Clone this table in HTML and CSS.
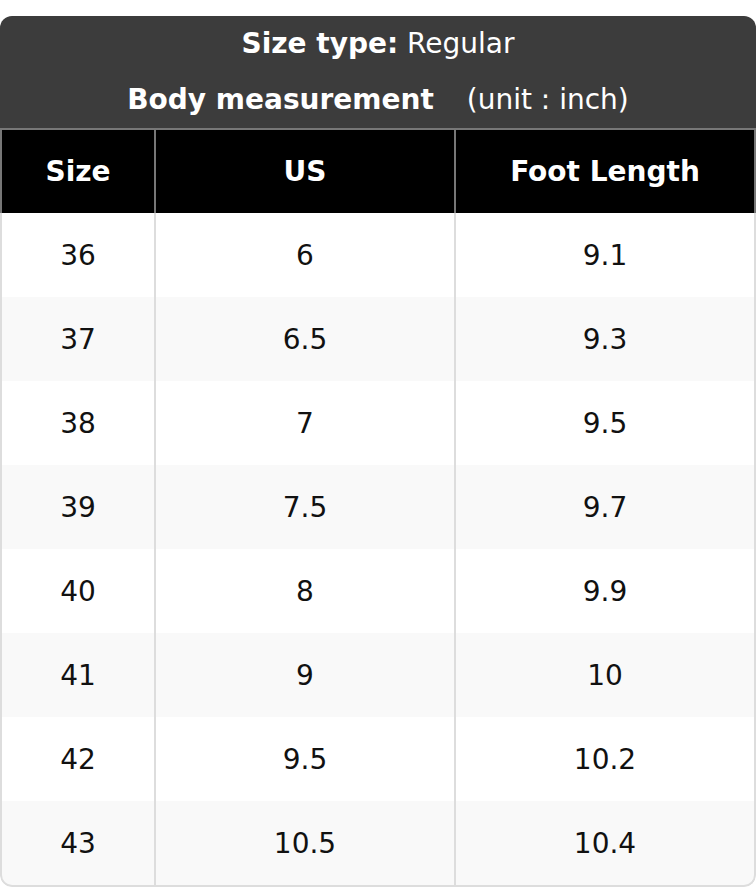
FILE: index.html
```html
<!DOCTYPE html>
<html lang="en">
<head>
<meta charset="utf-8">
<title>Size chart</title>
<link rel="stylesheet" href="styles.css">
</head>
<body>
<div class="card">
  <div class="head">
    <div class="head-line"><b>Size type:</b> Regular</div>
    <div class="head-line"><b class="gap">Body measurement</b> (unit : inch)</div>
  </div>
  <table class="chart">
    <colgroup>
      <col class="c1"><col class="c2"><col class="c3">
    </colgroup>
    <thead>
      <tr><th>Size</th><th>US</th><th>Foot Length</th></tr>
    </thead>
    <tbody>
      <tr><td>36</td><td>6</td><td>9.1</td></tr>
      <tr><td>37</td><td>6.5</td><td>9.3</td></tr>
      <tr><td>38</td><td>7</td><td>9.5</td></tr>
      <tr><td>39</td><td>7.5</td><td>9.7</td></tr>
      <tr><td>40</td><td>8</td><td>9.9</td></tr>
      <tr><td>41</td><td>9</td><td>10</td></tr>
      <tr><td>42</td><td>9.5</td><td>10.2</td></tr>
      <tr><td>43</td><td>10.5</td><td>10.4</td></tr>
    </tbody>
  </table>
</div>
</body>
</html>
```

FILE: styles.css
```css
html, body {
  margin: 0;
  padding: 0;
  background: #ffffff;
}
body {
  font-family: "DejaVu Sans", "Liberation Sans", sans-serif;
  font-size: 28px;
  color: #111111;
}
.card {
  margin-top: 16px;
  width: 756px;
  border-radius: 12px;
  overflow: hidden;
}
.head {
  background: #3c3c3c;
  color: #ffffff;
  text-align: center;
}
.head-line {
  height: 56px;
  line-height: 56px;
  white-space: nowrap;
}
.head-line b {
  font-weight: bold;
}
.gap {
  margin-right: 24px;
}
.chart {
  width: 756px;
  table-layout: fixed;
  border-collapse: separate;
  border-spacing: 0;
}
.c1 { width: 156px; }
.c2 { width: 300px; }
.c3 { width: 300px; }
.chart th {
  background: #000000;
  color: #ffffff;
  font-weight: bold;
  height: 83px;
  padding: 0;
  border-top: 2px solid #777777;
  border-right: 2px solid #777777;
  text-align: center;
  vertical-align: middle;
}
.chart th:first-child {
  border-left: 2px solid #777777;
}
.chart td {
  height: 84px;
  padding: 0;
  text-align: center;
  vertical-align: middle;
  border-right: 2px solid #dddddd;
  background: #ffffff;
}
.chart td:first-child {
  border-left: 2px solid #dddddd;
}
.chart tbody tr:nth-child(even) td {
  background: #f9f9f9;
}
.chart tbody tr:last-child td {
  border-bottom: 2px solid #dddddd;
}
.chart tbody tr:last-child td:first-child {
  border-bottom-left-radius: 12px;
}
.chart tbody tr:last-child td:last-child {
  border-bottom-right-radius: 12px;
}
```
